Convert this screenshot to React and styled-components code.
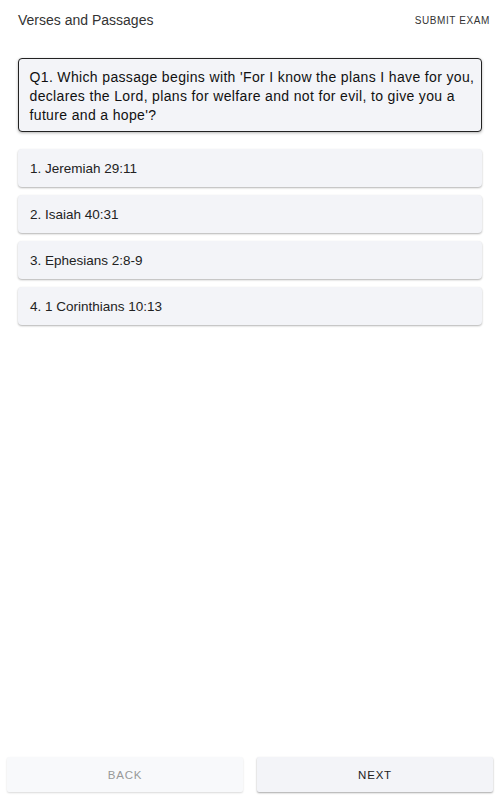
import React from 'react';
import styled, { createGlobalStyle } from 'styled-components';

const GlobalStyle = createGlobalStyle`
  html, body {
    margin: 0;
    padding: 0;
    background: #ffffff;
    font-family: 'Liberation Sans', Arial, sans-serif;
  }
  #root {
    height: 800px;
  }
`;

const options = [
  'Jeremiah 29:11',
  'Isaiah 40:31',
  'Ephesians 2:8-9',
  '1 Corinthians 10:13',
];

export default function App() {
  return (
    <>
      <GlobalStyle />
      <Page>
        <Header>
          <Title>Verses and Passages</Title>
          <SubmitButton>Submit Exam</SubmitButton>
        </Header>
        <Content>
          <QuestionCard>
            Q1. Which passage begins with 'For I know the plans I have for you,
            declares the Lord, plans for welfare and not for evil, to give you a
            future and a hope'?
          </QuestionCard>
          <OptionList>
            {options.map((o, i) => (
              <Option key={o}>
                {i + 1}. {o}
              </Option>
            ))}
          </OptionList>
        </Content>
        <Footer>
          <NavButton disabled>Back</NavButton>
          <NavButton>Next</NavButton>
        </Footer>
      </Page>
    </>
  );
}

const Page = styled.div`
  height: 800px;
  display: flex;
  flex-direction: column;
`;

const Header = styled.header`
  height: 40px;
  padding: 0 10px 0 18px;
  display: flex;
  align-items: center;
  justify-content: space-between;
`;

const Title = styled.h1`
  margin: 0;
  font-size: 14px;
  font-weight: 400;
  color: #333;
`;

const SubmitButton = styled.button`
  border: none;
  background: none;
  padding: 0;
  font-family: inherit;
  font-size: 10px;
  letter-spacing: 0.6px;
  text-transform: uppercase;
  color: #333;
  cursor: pointer;
`;

const Content = styled.main`
  flex: 1;
  padding: 18px 18px 0;
  display: flex;
  flex-direction: column;
  gap: 17px;
`;

const QuestionCard = styled.div`
  background: #f3f4f8;
  border: 1.5px solid #222;
  border-radius: 4px;
  box-shadow: 0 1px 3px rgba(0, 0, 0, 0.3);
  padding: 8.5px 0 6.5px 10.5px;
  font-size: 14px;
  letter-spacing: 0.35px;
  line-height: 19px;
  color: #111;
`;

const OptionList = styled.div`
  display: flex;
  flex-direction: column;
  gap: 8px;
`;

const Option = styled.div`
  height: 38px;
  display: flex;
  align-items: center;
  padding: 0 12px;
  background: #f3f4f8;
  border-radius: 4px;
  box-shadow: 0 1px 2px rgba(0, 0, 0, 0.3);
  font-size: 13.5px;
  color: #222;
  cursor: pointer;
`;

const Footer = styled.footer`
  display: grid;
  grid-template-columns: 1fr 1fr;
  gap: 14px;
  padding: 0 7px 8px;
`;

const NavButton = styled.button`
  height: 35px;
  border: none;
  border-radius: 2px;
  background: ${(p) => (p.disabled ? '#f8f9fb' : '#f3f4f8')};
  box-shadow: ${(p) =>
    p.disabled ? '0 1px 2px rgba(0, 0, 0, 0.15)' : '0 1px 2px rgba(0, 0, 0, 0.35)'};
  font-family: inherit;
  font-size: 11.5px;
  letter-spacing: 0.8px;
  text-transform: uppercase;
  color: ${(p) => (p.disabled ? '#999' : '#222')};
`;
